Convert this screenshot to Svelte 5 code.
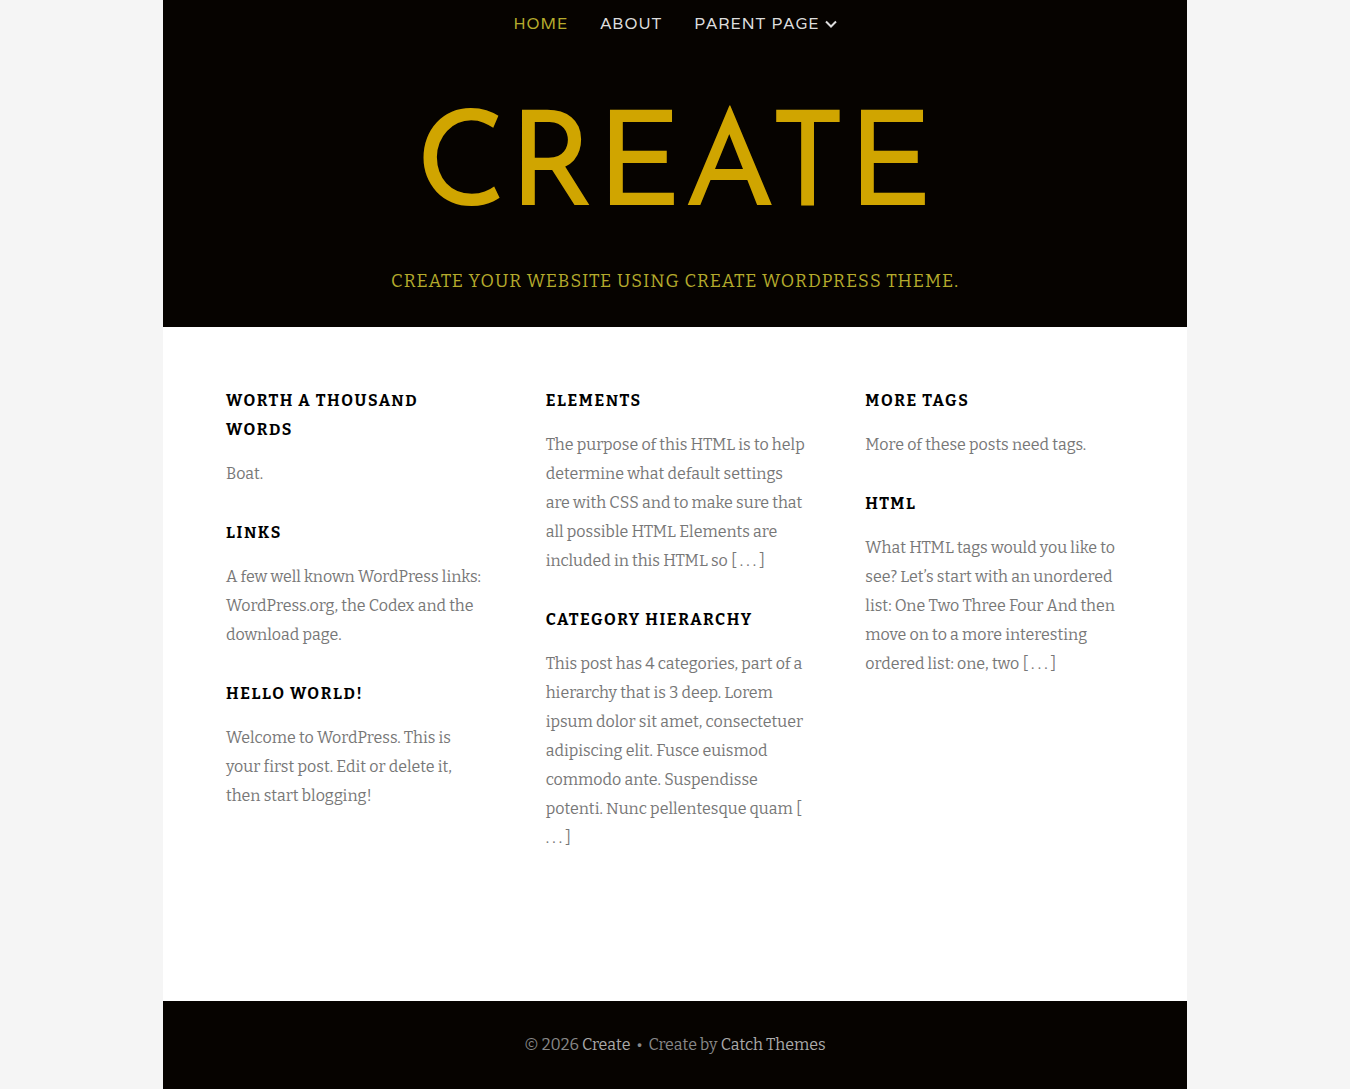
<script lang="ts">
	type Post = {
		title: string;
		text: string;
	};

	const nav = [
		{ label: 'Home', current: true, children: false },
		{ label: 'About', current: false, children: false },
		{ label: 'Parent Page', current: false, children: true },
	];

	// trimmed excerpts end in dots that stay together with the closing bracket
	const more = ' [ .\u00a0.\u00a0.\u00a0]';

	const columns: Post[][] = [
		[
			{ title: 'Worth A Thousand Words', text: 'Boat.' },
			{
				title: 'Links',
				text: 'A few well known WordPress links: WordPress.org, the Codex and the download page.',
			},
			{
				title: 'Hello world!',
				text: 'Welcome to WordPress. This is your first post. Edit or delete it, then start blogging!',
			},
		],
		[
			{
				title: 'Elements',
				text: 'The purpose of this HTML is to help determine what default settings are with CSS and to make sure that all possible HTML Elements are included in this HTML so' + more,
			},
			{
				title: 'Category Hierarchy',
				text: 'This post has 4 categories, part of a hierarchy that is 3 deep. Lorem ipsum dolor sit amet, consectetuer adipiscing elit. Fusce euismod commodo ante. Suspendisse potenti. Nunc pellentesque quam' + more,
			},
		],
		[
			{ title: 'More Tags', text: 'More of these posts need tags.' },
			{
				title: 'HTML',
				text: 'What HTML tags would you like to see? Let’s start with an unordered list: One Two Three Four And then move on to a more interesting ordered list: one, two' + more,
			},
		],
	];
</script>

<div class="page">
	<header class="site-header">
		<nav aria-label="Primary">
			<ul>
				{#each nav as item}
					<li>
						<a href="/" class:current={item.current}>
							{item.label}
							{#if item.children}
								<svg viewBox="0 0 12 8" width="12" height="8" aria-hidden="true">
									<path d="M1 1.500 6 6.500l5-5" />
								</svg>
							{/if}
						</a>
					</li>
				{/each}
			</ul>
		</nav>
		<h1><a href="/">Create</a></h1>
		<p class="tagline">Create your website using Create WordPress theme.</p>
	</header>

	<main class="posts">
		{#each columns as posts}
			<div class="column">
				{#each posts as post}
					<article>
						<h2><a href="/">{post.title}</a></h2>
						<p>{post.text}</p>
					</article>
				{/each}
			</div>
		{/each}
	</main>

	<footer class="site-footer">
		<span>© 2026 <a href="/">Create</a></span>
		<span>•</span>
		<span>Create by <a href="/">Catch Themes</a></span>
	</footer>
</div>

<style>
	:global(body) {
		background: #f5f5f5;
	}

	.page {
		max-width: 1024px;
		margin: 0 auto;
		background: #fff;
		color: #777;
		font-family: Bitter, 'Liberation Serif', serif;
		font-size: 16px;
		line-height: 29px;
	}

	a {
		color: inherit;
		text-decoration: none;
	}

	.site-header {
		padding: 9px 32px 31px;
		background: #060300;
		text-align: center;
		text-transform: uppercase;
	}

	nav ul {
		display: flex;
		flex-wrap: wrap;
		justify-content: center;
		gap: 0 32px;
		margin: 0;
		padding: 0;
		list-style: none;
	}

	nav a {
		display: flex;
		align-items: center;
		gap: 5px;
		color: #ddd;
		font-family: Varela, Mulish, Muli, Montserrat, Lato, sans-serif;
		font-size: 16px;
		font-weight: 400;
		line-height: 30px;
		letter-spacing: 1px;
	}

	nav a.current {
		color: #b5ab2c;
	}

	nav svg {
		fill: none;
		stroke: currentColor;
		stroke-width: 2;
	}

	h1 {
		margin: 50px 0 12px;
		color: #d0a500;
		font-family: 'Josefin Sans', Lato, sans-serif;
		font-size: 132px;
		font-weight: 400;
		line-height: 166px;
		letter-spacing: 1px;
	}

	.tagline {
		margin: 0;
		color: #b5ab2c;
		font-size: 18px;
		letter-spacing: 1px;
	}

	.posts {
		display: grid;
		grid-template-columns: repeat(3, 1fr);
		gap: 60px;
		padding: 59px 62px 119px 63px;
	}

	article {
		margin-bottom: 30px;
	}

	h2 {
		margin: 0 0 15px;
		color: #000;
		font-size: 16px;
		font-weight: 700;
		line-height: 29px;
		letter-spacing: 0.1em;
		text-transform: uppercase;
	}

	article p {
		margin: 0;
	}

	.site-footer {
		display: flex;
		flex-wrap: wrap;
		justify-content: center;
		gap: 0 6px;
		padding: 29px 32px 30px;
		background: #060300;
		color: #888;
	}

	.site-footer a {
		color: #aaa;
	}

	@media (max-width: 780px) {
		.posts {
			grid-template-columns: 1fr;
			gap: 0;
			padding: 40px 32px;
		}

		h1 {
			font-size: 64px;
			line-height: 80px;
		}
	}
</style>
